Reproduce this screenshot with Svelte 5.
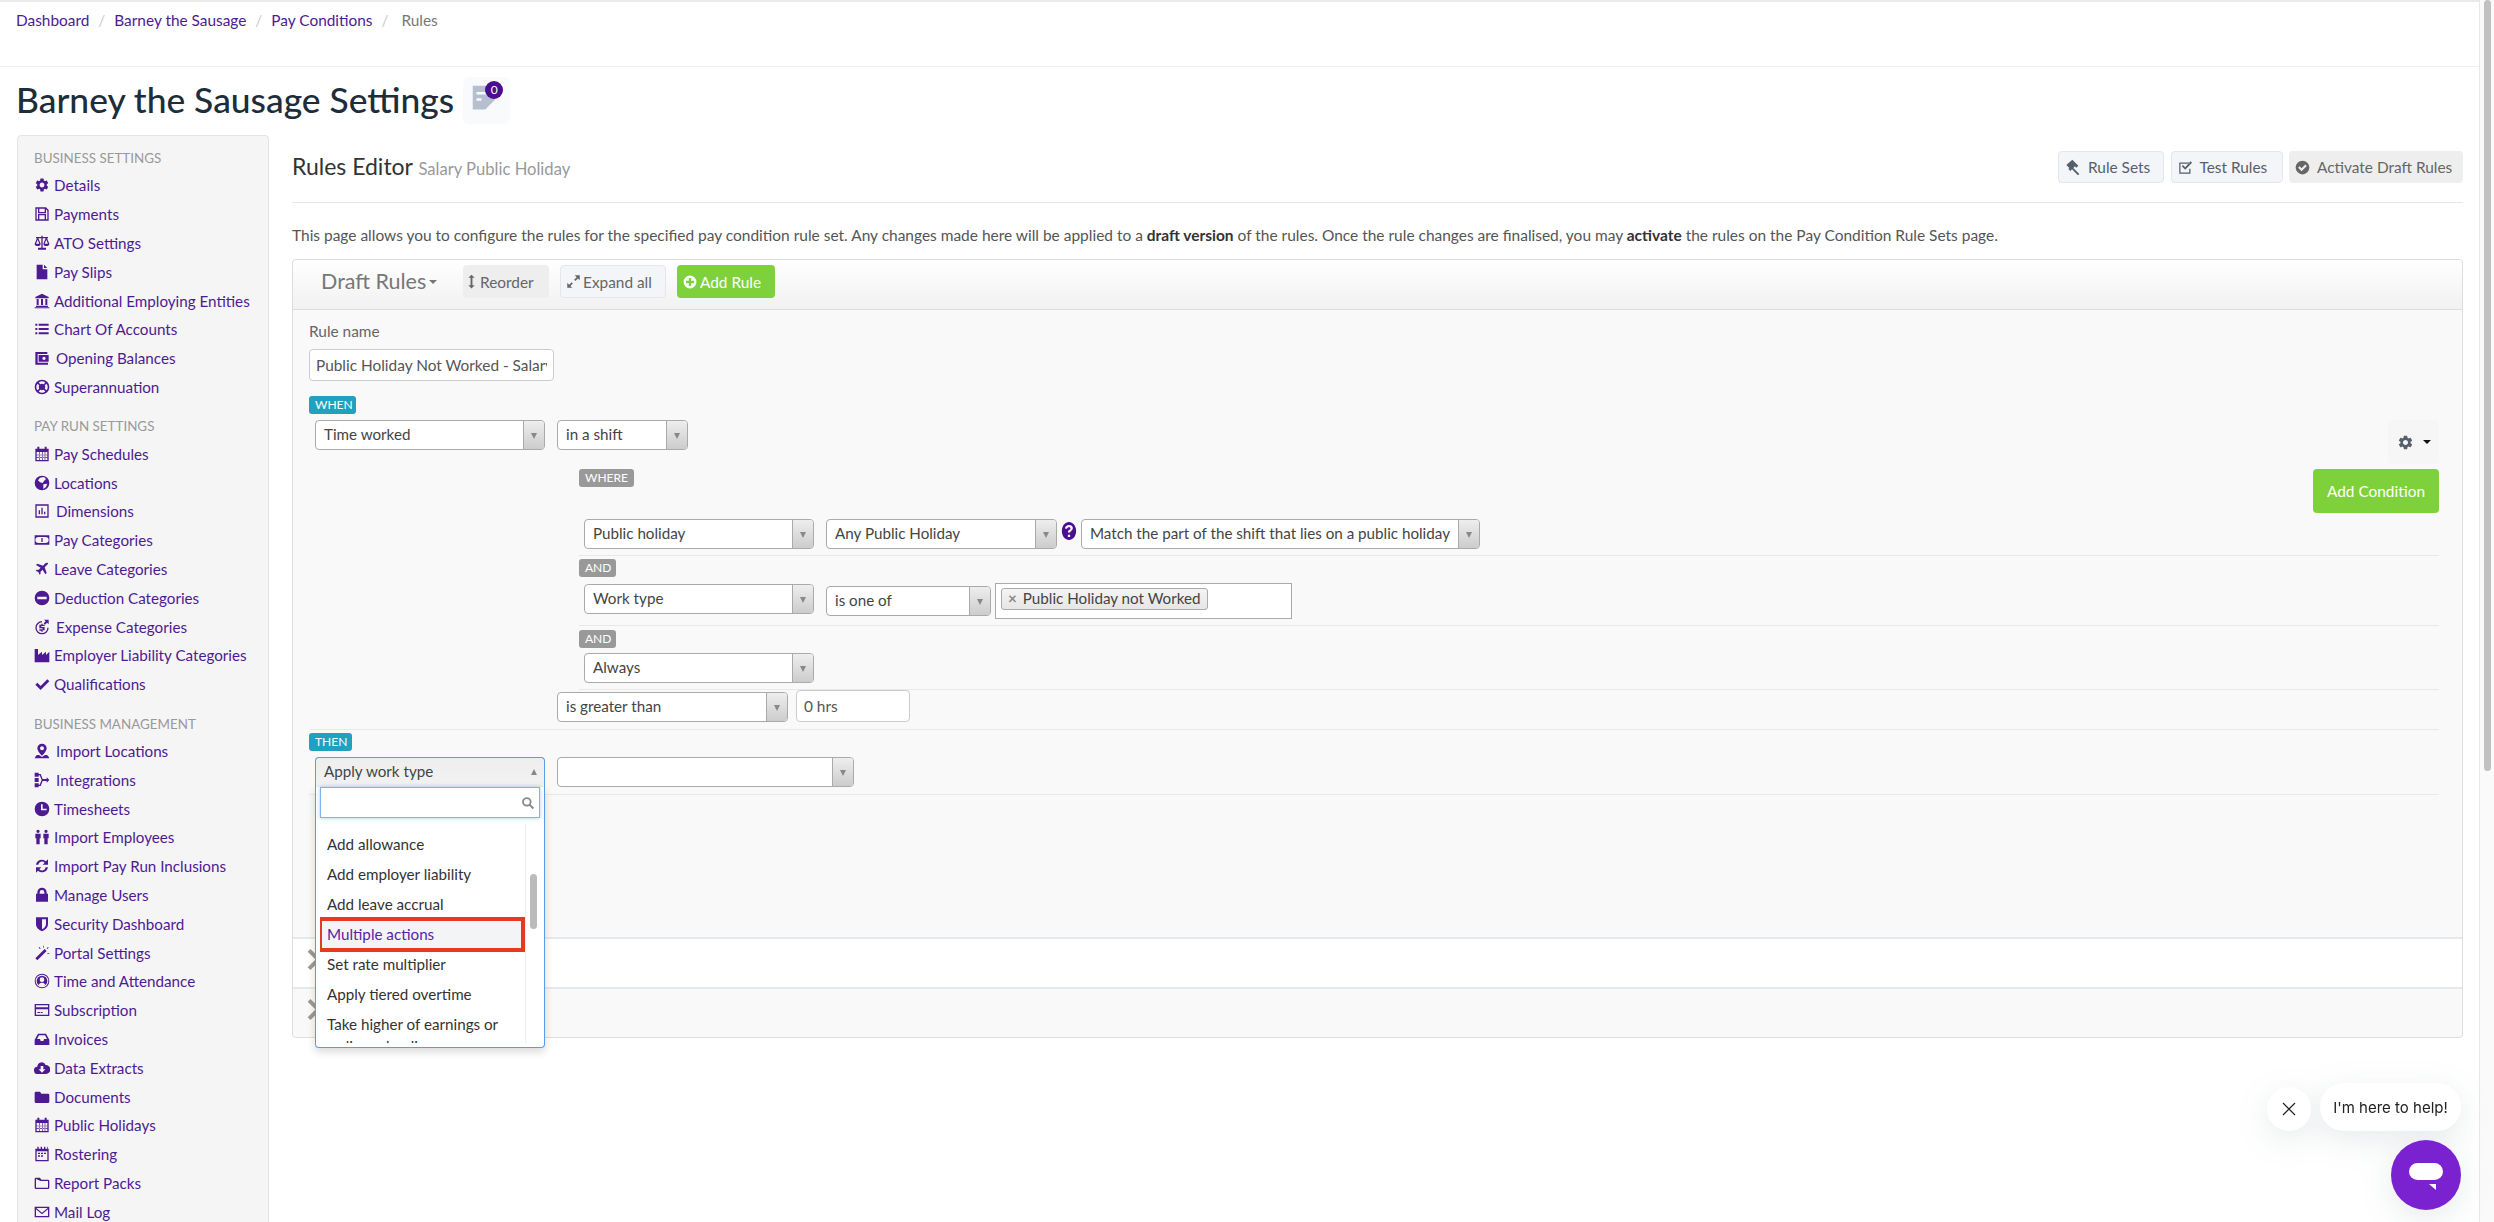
<script>
	const icons = {
		cog: "M19.14 12.94c.04-.3.06-.61.06-.94 0-.32-.02-.64-.07-.94l2.03-1.58c.18-.14.23-.41.12-.61l-1.92-3.32c-.12-.22-.37-.29-.59-.22l-2.39.96c-.5-.38-1.03-.7-1.62-.94l-.36-2.54c-.04-.24-.24-.41-.48-.41h-3.84c-.24 0-.43.17-.47.41l-.36 2.54c-.59.24-1.13.57-1.62.94l-2.39-.96c-.22-.08-.47 0-.59.22L2.74 8.87c-.12.21-.08.47.12.61l2.03 1.58c-.05.3-.09.63-.09.94s.02.64.07.94l-2.03 1.58c-.18.14-.23.41-.12.61l1.92 3.32c.12.22.37.29.59.22l2.39-.96c.5.38 1.03.7 1.62.94l.36 2.54c.05.24.24.41.48.41h3.84c.24 0 .44-.17.47-.41l.36-2.54c.59-.24 1.13-.56 1.62-.94l2.39.96c.22.08.47 0 .59-.22l1.92-3.32c.12-.22.07-.47-.12-.61l-2.01-1.58zM12 15.6c-1.98 0-3.6-1.62-3.6-3.6s1.62-3.6 3.6-3.6 3.6 1.62 3.6 3.6-1.62 3.6-3.6 3.6z",
		save: "M2 2h16l4 4v16H2zM4 4v16h2v-8h12v8h2V7l-2-2v6H6V4zM8 4v5h8V4zM8 14v6h8v-6z",
		scale: "M11 1h2v2h8v2h-1.5l3.5 8a4.5 3.5 0 0 1-9 0l3.5-8H13v14h5v3H6v-3h5V5H6.500l3.500 8a4.500 3.500 0 0 1-9 0l3.500-8H3V3h8zM5.500 7l-2.500 6h5zM18.500 7L16 13h5z",
		file: "M4 1h9v7h7v15H4zM15 1l5 5h-5z",
		bank: "M12 1l10 5v2H2V6zM4 9h3v9H4zM10.500 9h3v9h-3zM17 9h3v9h-3zM3 19h18v2H3zM1 21.500h22V23H1z",
		list: "M2 4h3v3H2zM7 4h15v3H7zM2 10.500h3v3H2zM7 10.500h15v3H7zM2 17h3v3H2zM7 17h15v3H7z",
		wallet: "M2 3h18v3H5.500v13H21v3H2zM7 7.500h15v10H7zM15 10a2.500 2.500 0 1 0 0 5a2.500 2.500 0 1 0 0-5z",
		ring: "M12 1a11 11 0 1 1 0 22a11 11 0 1 1 0-22zM7 5.200l2.500 2.600a5 5 0 0 1 5 0L17 5.200a8.500 8.500 0 0 0-10 0zM5.200 7a8.500 8.500 0 0 0 0 10l2.600-2.500a5 5 0 0 1 0-5zM18.800 7l-2.600 2.500a5 5 0 0 1 0 5l2.600 2.500a8.500 8.500 0 0 0 0-10zM9.500 16.200L7 18.800a8.500 8.500 0 0 0 10 0l-2.500-2.600a5 5 0 0 1-5 0z",
		cal: "M2 4h3V1h3v3h8V1h3v3h3v19H2zM4 9v12h16V9zM8 9h1v12H8zM12 9h1v12h-1zM16 9h1v12h-1zM4 13h16v1H4zM4 17h16v1H4z",
		globe: "M12 1a11 11 0 1 0 0 22a11 11 0 1 0 0-22zM9 4l6-1 3 3-3 3-2 3-4-1-3-3zM14 14l6-1-2 5-4 3z",
		chart: "M2 2h20v20H2zM4 4v16h16V4zM7 11h2v6H7zM11 7h2v10h-2zM15 13h2v4h-2z",
		money: "M1 5h22v14H1zM7 7.500a5 4.500 0 0 0 0 9h10a5 4.500 0 0 0 0-9zM11 9h2v6h-2z",
		plane: "M21 3c-1-1-3-.5-4 .5l-3.500 3.500L5 4 3 6l7 4-3.500 3.500-2.500-.5-1.500 1.500 4 2 2 4 1.500-1.500-.5-2.500L13 13l4 7 2-2-3-8.500 3.500-3.500c1-1 2-3 1.500-3.500z",
		minus: "M12 1a11 11 0 1 0 0 22a11 11 0 1 0 0-22zM5 10h14v4H5z",
		expense: "M12 3v2a8 8 0 1 0 8 8h2a10 10 0 1 1-10-10zM15 1h7v7l-2.500-2.500-3 3-2-2 3-3zM11 7h2v1.500h3v2h-5v1.500h5v5h-3V19h-2v-1.500H8v-2h5V14H8V8.500h3z",
		factory: "M1 3h5v9l6-5v5l6-5v5l5-5v16H1z",
		check: "M2 13l3-3 5 5L20 5l3 3L10 21z",
		pin: "M12 1a7 7 0 0 0-7 7c0 5 7 11 7 11s7-6 7-11a7 7 0 0 0-7-7zM12 5a3 3 0 1 0 0 6a3 3 0 1 0 0-6zM3 19c2-1 3-1 4.500-1l4.500 3 4.500-3c1.500 0 2.500 0 4.500 1l2 4H1z",
		nodes: "M1 1h6v6H1zM1 17h6v6H1zM7 3h3l3 7.500h6V8l4 4-4 4v-2.500h-6L10 21H7v-2h1.500l3-7-3-7H7zM1 9h6v6H1z",
		clock: "M12 1a11 11 0 1 0 0 22a11 11 0 1 0 0-22zM10.500 5H13v6.500h6V14h-8.500z",
		people: "M6 1a2.500 2.500 0 1 0 0 5a2.500 2.500 0 1 0 0-5zM2 7h8v7H8.500v9h-5v-9H2zM18 1a2.500 2.500 0 1 0 0 5a2.500 2.500 0 1 0 0-5zM14 7h8v7h-1.500v9h-5v-9H14z",
		sync: "M3 10a9 9 0 0 1 15-5l3-3v8h-8l3-3a5.500 5.500 0 0 0-9.500 3zM21 14a9 9 0 0 1-15 5l-3 3v-8h8l-3 3a5.500 5.500 0 0 0 9.500-3z",
		lock: "M5 10V8a7 7 0 0 1 14 0v2h2v12H3V10zM8.500 10h7V8a3.500 3.500 0 0 0-7 0z",
		shield: "M3 2h18v10c0 6-5 9-9 11-4-2-9-5-9-11zM12 5v15c3-1.500 6-4 6-8V5z",
		wand: "M2 20L16 6l3 3L5 23zM14 1h1v3h-1zM21 3l1 1-2 2-1-1zM8 3l2 2-1 1-2-2zM20 12h3v1h-3z",
		person: "M12 1a11 11 0 1 0 0 22a11 11 0 1 0 0-22zM12 2.500a9.500 9.500 0 1 1 0 19a9.500 9.500 0 1 1 0-19zM12 4a8 8 0 1 0 0 16a8 8 0 1 0 0-16zM12 6.500a3.500 3.500 0 1 1 0 7a3.500 3.500 0 1 1 0-7zM7 18c1-3 3-3.500 5-3.500s4 .5 5 3.500a8 8 0 0 1-10 0z",
		card: "M1 3h22v18H1zM3 5v3h18V5zM3 11v8h18v-8zM5 15h4v1.500H5zM10 15h3v1.500h-3z",
		inbox: "M6 4h12l5 9v8H1v-8zM7.500 6.500L4.500 12H9l1 3h4l1-3h4.500l-3-5.500z",
		cloud: "M6 21a5.500 5.500 0 0 1-1-11 6.500 6.500 0 0 1 12.500-2.500A6.500 6.500 0 0 1 18 21zM10 9v5H7l5 5 5-5h-3V9z",
		folder: "M1 6a2 2 0 0 1 2-2h6l2 3h10a2 2 0 0 1 2 2v10a2 2 0 0 1-2 2H3a2 2 0 0 1-2-2z",
		folderO: "M1 6a2 2 0 0 1 2-2h6l2 3h10a2 2 0 0 1 2 2v10a2 2 0 0 1-2 2H3a2 2 0 0 1-2-2zM3 6v13h18V9H10z",
		roster: "M2 4h3V1h2v3h3V1h2v3h3V1h2v3h3V1h1v3h1v19H2zM4 8v13h16V8zM6 10h3v2H6zM10.500 10h3v2h-3zM15 10h3v2h-3zM6 14h3v2H6zM10.500 14h3v2h-3z",
		mail: "M1 4h22v16H1zM3.500 6l8.500 7 8.500-7zM3 8v10h18V8l-9 7.500z",
		gavel: "M11 1l9 9-3 3-2-2-2.500 2.500 9 9-2 2-9-9L8 18l-3-3 1.500-1.500L2 9z",
		checkSq: "M2 4h16v2H4v14h14v-6h2v8H2zM6 10l2-2 3.500 3.500L20 2l2.500 2.500-11 11z",
		checkC: "M12 1a11 11 0 1 0 0 22a11 11 0 1 0 0-22zM5 12.500L7.500 10l3 3 6-6L19 9.500l-8.500 8.500z",
		plusC: "M12 1a11 11 0 1 0 0 22a11 11 0 1 0 0-22zM10 5h4v5h5v4h-5v5h-4v-5H5v-4h5z",
		expand: "M14 2h8v8l-3-3-4 4-2-2 4-4zM10 22H2v-8l3 3 4-4 2 2-4 4z",
		updown: "M12 1l5 5h-3.500v12H17l-5 5-5-5h3.500V6H7z",
		search: "M10 2a8 8 0 1 0 4.500 14.600L20 22.500l2.500-2.500-5.900-5.500A8 8 0 0 0 10 2zM10 5a5 5 0 1 1 0 10a5 5 0 1 1 0-10z",
		note: "M3 3h18v11l-8 8H3zM6 8v2h8V8zM6 13v2h4v-2z",
		help: "M12 0c5 0 9.500 5 9.500 12s-4.500 12-9.500 12-9.500-5-9.500-12S7 0 12 0zM12 4c-3 0-5 2-5.500 4.500l3 .5c.3-1.300 1-2 2.500-2s2 .8 2 1.600c0 1-1 1.500-2 2.200-1 .8-1.500 1.700-1.500 3.200h3c0-1 .5-1.400 1.500-2.100 1.300-1 2-2 2-3.500C17.500 6 15.500 4 12 4zM10.500 17v3h3v-3z"
	};

	const sections = [
		{ title: "Business Settings", items: [
			["cog", "Details"], ["save", "Payments"], ["scale", "ATO Settings"], ["file", "Pay Slips"],
			["bank", "Additional Employing Entities"], ["list", "Chart Of Accounts"], ["wallet", "Opening Balances", true], ["ring", "Superannuation"]
		]},
		{ title: "Pay Run Settings", items: [
			["cal", "Pay Schedules"], ["globe", "Locations"], ["chart", "Dimensions", true], ["money", "Pay Categories"],
			["plane", "Leave Categories"], ["minus", "Deduction Categories"], ["expense", "Expense Categories", true],
			["factory", "Employer Liability Categories"], ["check", "Qualifications"]
		]},
		{ title: "Business Management", items: [
			["pin", "Import Locations", true], ["nodes", "Integrations", true], ["clock", "Timesheets"], ["people", "Import Employees"],
			["sync", "Import Pay Run Inclusions"], ["lock", "Manage Users"], ["shield", "Security Dashboard"], ["wand", "Portal Settings"],
			["person", "Time and Attendance"], ["card", "Subscription"], ["inbox", "Invoices"], ["cloud", "Data Extracts"],
			["folder", "Documents"], ["cal", "Public Holidays"], ["roster", "Rostering"], ["folderO", "Report Packs"], ["mail", "Mail Log"]
		]}
	];

	const crumbs = ["Dashboard", "Barney the Sausage", "Pay Conditions"];
	const options = ["Add allowance", "Add employer liability", "Add leave accrual", "Multiple actions", "Set rate multiplier", "Apply tiered overtime", "Take higher of earnings or ordinary loading"];
</script>

{#snippet icon(name, size = 15)}
	<svg class="ico" width={size} height={size} viewBox="0 0 24 24" aria-hidden="true"><path fill="currentColor" fill-rule="evenodd" d={icons[name]} /></svg>
{/snippet}

{#snippet select(label, cls)}
	<div class="sel {cls}">
		<span class="sel-label">{label}</span>
		<span class="sel-arrow"></span>
	</div>
{/snippet}

<div class="page">
	<nav class="crumbs">
		{#each crumbs as c}
			<a href="#top">{c}</a><span class="sep">/</span>
		{/each}
		<span class="here">Rules</span>
	</nav>

	<header class="title">
		<h1>Barney the Sausage Settings</h1>
		<div class="notes">
			<span class="note-ico">{@render icon("note", 30)}</span>
			<span class="count">0</span>
		</div>
	</header>

	<div class="columns">
		<aside class="side">
			{#each sections as s}
				<h4>{s.title}</h4>
				<ul>
					{#each s.items as it}
						<li class:wide={it[2]}>{@render icon(it[0], 16)}<a href="#top">{it[1]}</a></li>
					{/each}
				</ul>
			{/each}
		</aside>

		<main class="main">
			<div class="head">
				<h2>Rules Editor <small>Salary Public Holiday</small></h2>
				<div class="head-btns">
					<button class="btn light b106">{@render icon("gavel", 16)}<span>Rule Sets</span></button>
					<button class="btn light b112">{@render icon("checkSq", 15)}<span>Test Rules</span></button>
					<button class="btn muted b174">{@render icon("checkC", 15)}<span>Activate Draft Rules</span></button>
				</div>
			</div>

			<p class="intro">This page allows you to configure the rules for the specified pay condition rule set. Any changes made here will be applied to a <b>draft version</b> of the rules. Once the rule changes are finalised, you may <b>activate</b> the rules on the Pay Condition Rule Sets page.</p>

			<section class="panel">
				<div class="panel-head">
					<span class="draft">Draft Rules<i class="caret"></i></span>
					<button class="tool muted">{@render icon("updown", 15)}Reorder</button>
					<button class="tool light">{@render icon("expand", 15)}Expand all</button>
					<button class="tool green">{@render icon("plusC", 14)}Add Rule</button>
				</div>

				<div class="rule">
					<label class="rule-label" for="rule-name">Rule name</label>
					<input id="rule-name" class="rule-name" value="Public Holiday Not Worked - Salary" readonly />

					<div class="tag blue when-tag">WHEN</div>
					<div class="when">
						{@render select("Time worked", "w230")}
						{@render select("in a shift", "w131")}
						<button class="gear">{@render icon("cog", 17)}<i class="caret dark"></i></button>
					</div>

					<div class="where">
						<div class="tag grey">WHERE</div>
						<button class="add-cond">Add Condition</button>
					</div>

					<div class="conds">
						<div class="cond first">
							{@render select("Public holiday", "w230")}
							{@render select("Any Public Holiday", "w231")}
							<span class="help">{@render icon("help", 18)}</span>
							{@render select("Match the part of the shift that lies on a public holiday", "w399")}
						</div>
						<div class="tag grey and">AND</div>
						<div class="cond second">
							{@render select("Work type", "w230")}
							{@render select("is one of", "w165 low")}
							<div class="multi">
								<span class="chip"><i>×</i>Public Holiday not Worked</span>
							</div>
						</div>
						<div class="tag grey and">AND</div>
						<div class="cond third">
							{@render select("Always", "w230")}
						</div>
					</div>

					<div class="greater">
						{@render select("is greater than", "w231")}
						<input class="hours" value="0 hrs" readonly />
					</div>

					<div class="tag blue then-tag">THEN</div>
					<div class="then">
						<div class="combo">
							<div class="sel open"><span class="sel-label">Apply work type</span><span class="up"></span></div>
							<div class="drop">
								<div class="find">{@render icon("search", 14)}</div>
								<div class="opts">
									<ul>
										{#each options as o}
											<li class:hit={o === "Multiple actions"} class:wrap={o.length > 30}>{o}</li>
										{/each}
									</ul>
									<div class="track"><span class="thumb"></span></div>
								</div>
							</div>
						</div>
						{@render select("", "w297")}
					</div>
				</div>

				<div class="collapsed"><span class="chev"></span></div>
				<div class="collapsed last"><span class="chev"></span></div>
			</section>
		</main>
	</div>
</div>

<div class="scroll"><span></span></div>

<div class="chat">
	<div class="chat-row">
		<button class="chat-x" aria-label="Close">
			<svg width="14" height="14" viewBox="0 0 14 14"><path d="M1 1l12 12M13 1L1 13" stroke="#222" stroke-width="1.200" fill="none" /></svg>
		</button>
		<div class="chat-msg">I'm here to help!</div>
	</div>
	<button class="chat-btn" aria-label="Open chat">
		<svg width="34" height="28" viewBox="0 0 34 28"><rect x="0" y="0" width="34" height="17" rx="8.500" fill="#fff" /><path d="M20 21l7 0 0 6z" fill="#fff" /></svg>
	</button>
</div>

<style>
	:global(body) {
		margin: 0;
		background: #fff;
		overflow: hidden;
		font-family: Lato, "Liberation Sans", sans-serif;
		font-size: 15.400px;
		color: #555;
	}

	a {
		color: #4e1a94;
		text-decoration: none;
	}

	button {
		font: inherit;
		border: 0;
		cursor: pointer;
	}

	.ico {
		flex: none;
		display: block;
	}

	.page {
		height: 1222px;
		overflow: hidden;
	}

	.crumbs {
		border-top: 2px solid #eaeaea;
		border-bottom: 1px solid #efefef;
		padding: 9px 0 0 16px;
		height: 55px;
		font-size: 15.400px;
		line-height: 18px;
	}

	.sep {
		color: #ccc;
		margin: 0 9px;
	}

	.here {
		color: #777;
	}

	.title {
		display: flex;
		align-items: flex-start;
		height: 58px;
		padding: 10px 0 0 16px;
	}

	h1 {
		margin: 0;
		font-size: 35.400px;
		line-height: 46px;
		font-weight: 500;
		color: #1d2d3a;
	}

	.notes {
		position: relative;
		width: 47px;
		height: 47px;
		margin-left: 9px;
		background: #f9fafb;
		border-radius: 6px;
		box-sizing: border-box;
		padding: 5px 0 0 6px;
	}

	.note-ico {
		color: #b5bfd0;
		display: block;
	}

	.count {
		position: absolute;
		left: 22px;
		top: 4px;
		width: 18px;
		height: 18px;
		border-radius: 50%;
		background: #4a0e8f;
		color: #fff;
		font-size: 12px;
		line-height: 18px;
		text-align: center;
	}

	.columns {
		display: flex;
		align-items: flex-start;
		padding: 0 31px 0 17px;
		gap: 23px;
	}

	.side {
		flex: none;
		width: 252px;
		box-sizing: border-box;
		background: #f5f5f5;
		border: 1px solid #e3e3e3;
		border-radius: 4px;
		padding: 13px 0 0 16px;
	}

	.side h4 {
		margin: 0 0 4px;
		font-size: 13.400px;
		line-height: 18px;
		font-weight: 400;
		text-transform: uppercase;
		color: #999;
	}

	.side ul {
		list-style: none;
		margin: 0 0 16px;
		padding: 0;
	}

	.side li {
		display: flex;
		align-items: center;
		height: 28.800px;
		color: #4e1a94;
		white-space: nowrap;
		font-size: 15.200px;
	}

	.side li a {
		margin-left: 4px;
	}

	.side li.wide a {
		margin-left: 6px;
	}

	.main {
		flex: 1;
		min-width: 0;
	}

	.head {
		display: flex;
		justify-content: space-between;
		align-items: flex-start;
		padding-top: 17px;
		height: 50px;
		border-bottom: 1px solid #e7e7e7;
	}

	h2 {
		margin: -1px 0 0;
		font-size: 23px;
		line-height: 30px;
		font-weight: 400;
		color: #333;
	}

	h2 small {
		font-size: 16.600px;
		color: #999;
	}

	.head-btns {
		display: flex;
		gap: 6.500px;
		margin-top: -1px;
	}

	.btn {
		display: flex;
		align-items: center;
		height: 32px;
		padding: 0 0 0 6px;
		gap: 7px;
		border-radius: 4px;
		color: #56606b;
		box-sizing: border-box;
	}

	.b106 { width: 106px; }
	.b112 { width: 112px; }
	.b174 { width: 174px; }

	.light {
		background: #f3f5f8;
		border: 1px solid #e3e7ec;
	}

	.muted {
		background: #eee;
		color: #666;
	}

	.intro {
		margin: 0;
		padding-top: 23px;
		height: 33px;
		line-height: 18px;
		font-size: 15.480px;
		white-space: nowrap;
	}

	.intro b {
		color: #333;
		font-weight: 700;
	}

	.panel {
		border: 1px solid #ddd;
		border-radius: 4px;
		background: #f9f9f9;
	}

	.panel-head {
		display: flex;
		align-items: flex-start;
		height: 44px;
		padding: 5px 0 0 28px;
		border-bottom: 1px solid #ddd;
		background: linear-gradient(#fff, #f1f1f1);
		border-radius: 4px 4px 0 0;
	}

	.draft {
		font-size: 21.500px;
		line-height: 33px;
		color: #777;
		width: 142px;
		display: flex;
		align-items: center;
	}

	.caret {
		display: inline-block;
		width: 0;
		height: 0;
		margin-left: 3px;
		border: 4px solid transparent;
		border-top-color: #777;
		border-bottom: 0;
	}

	.caret.dark {
		border-top-color: #111;
		margin-left: 9px;
	}

	.tool {
		display: flex;
		align-items: center;
		height: 33px;
		box-sizing: border-box;
		border-radius: 4px;
		padding: 0 6px;
		gap: 3px;
		color: #666;
		margin-right: 11px;
		white-space: nowrap;
	}

	.tool.muted {
		width: 86px;
		padding: 0 1px;
		gap: 1px;
	}

	.tool.light {
		width: 106px;
		padding: 0 5px;
		gap: 2px;
	}

	.tool.green {
		width: 98px;
		background: #7ed13a;
		color: #fff;
	}

	.rule {
		padding: 0 23px 0 16px;
		height: 627px;
		box-sizing: border-box;
	}

	.rule-label {
		display: block;
		height: 39px;
		padding-top: 12px;
		box-sizing: border-box;
		line-height: 18px;
		color: #666;
	}

	.rule-name {
		display: block;
		width: 245px;
		height: 32px;
		box-sizing: border-box;
		padding: 0 6px;
		border: 1px solid #ccc;
		border-radius: 4px;
		font: inherit;
		color: #555;
		background: #fff;
		outline: 0;
	}

	.tag {
		display: inline-block;
		height: 18px;
		line-height: 17px;
		padding: 0 6px;
		box-sizing: border-box;
		border-radius: 3px;
		font-size: 12px;
		color: #fff;
		vertical-align: top;
	}

	.blue {
		background: #21a0c0;
	}

	.grey {
		background: #999;
	}

	.when-tag {
		display: block;
		width: 47px;
		margin-top: 15px;
	}

	.when {
		display: flex;
		align-items: flex-start;
		gap: 12px;
		height: 49px;
		margin: 6px 0 0 6px;
	}

	.gear {
		margin-left: auto;
		width: 51px;
		height: 44px;
		background: #f6f6f6;
		color: #56606b;
		border-radius: 4px;
		display: flex;
		align-items: center;
		justify-content: center;
	}

	.where {
		display: flex;
		justify-content: space-between;
		align-items: flex-start;
		height: 50px;
		margin-left: 270px;
	}

	.add-cond {
		width: 126px;
		height: 44px;
		background: #7ed13a;
		color: #fff;
		border-radius: 4px;
	}

	.conds {
		margin-left: 270px;
	}

	.cond {
		display: flex;
		align-items: flex-start;
		padding-left: 5px;
		gap: 12px;
		border-bottom: 1px solid #e8e8e8;
		box-sizing: border-box;
	}

	.first {
		height: 37px;
	}

	.second {
		height: 42px;
		margin-top: 7px;
	}

	.third {
		height: 37px;
		margin-top: 5px;
	}

	.and {
		display: block;
		width: 37px;
		margin-top: 3px;
	}

	.cond.second + .and {
		margin-top: 4px;
	}

	.second .low {
		margin-top: 2px;
	}

	.sel {
		display: flex;
		flex: none;
		height: 30px;
		box-sizing: border-box;
		background: #fff;
		border: 1px solid #aaa;
		border-radius: 4px;
		overflow: hidden;
	}

	.sel-label {
		flex: 1;
		min-width: 0;
		padding-left: 8px;
		line-height: 26px;
		white-space: nowrap;
		overflow: hidden;
		font-size: 15.200px;
		color: #444;
	}

	.sel-arrow {
		position: relative;
		flex: none;
		width: 20px;
		border-left: 1px solid #aaa;
		background: linear-gradient(#eee, #ccc);
	}

	.sel-arrow::after {
		content: "";
		position: absolute;
		left: 7px;
		top: 12px;
		border: 3.500px solid transparent;
		border-top: 6px solid #888;
		border-bottom: 0;
	}

	.w230 { width: 230px; }
	.w131 { width: 131px; }
	.w231 { width: 231px; }
	.w399 { width: 399px; }
	.w165 { width: 165px; }
	.w297 { width: 297px; }

	.help {
		color: #4a0e8f;
		margin: 3px -6px 0 -6px;
		width: 12px;
	}

	.help :global(svg) {
		margin-left: -3px;
	}

	.multi {
		width: 297px;
		height: 36px;
		margin: -1px 0 0 -8px;
		box-sizing: border-box;
		padding: 4px 5px;
		background: #fff;
		border: 1px solid #aaa;
	}

	.chip {
		display: inline-block;
		height: 22px;
		box-sizing: border-box;
		padding: 0 6px;
		line-height: 19px;
		border: 1px solid #aaa;
		border-radius: 3px;
		background: linear-gradient(#f4f4f4, #e6e6e6);
		color: #444;
		font-size: 15.200px;
	}

	.chip i {
		font-style: normal;
		font-weight: 700;
		color: #888;
		margin-right: 6px;
	}

	.greater {
		display: flex;
		align-items: flex-start;
		gap: 8px;
		height: 40px;
		padding-left: 248px;
		border-bottom: 1px solid #e8e8e8;
		box-sizing: border-box;
	}

	.greater .sel {
		margin-top: 2px;
	}

	.hours {
		width: 114px;
		height: 32px;
		box-sizing: border-box;
		padding: 0 7px;
		border: 1px solid #ccc;
		border-radius: 4px;
		font: inherit;
		color: #555;
		background: #fff;
		outline: 0;
	}

	.then-tag {
		display: block;
		width: 43px;
		margin-top: 3px;
	}

	.then {
		display: flex;
		align-items: flex-start;
		gap: 12px;
		height: 38px;
		margin-top: 6px;
		padding-left: 6px;
		border-bottom: 1px solid #e8e8e8;
		box-sizing: border-box;
	}

	.combo {
		position: relative;
		width: 230px;
		height: 30px;
		flex: none;
	}

	.sel.open {
		width: 230px;
		border-color: #5b9bea;
		border-bottom: 0;
		border-radius: 4px 4px 0 0;
		background: linear-gradient(#eee, #f2f2f2);
		align-items: flex-start;
	}

	.up {
		flex: none;
		margin: 11px 7px 0 0;
		border: 3.500px solid transparent;
		border-bottom: 6px solid #888;
		border-top: 0;
	}

	.drop {
		position: absolute;
		left: 0;
		top: 30px;
		z-index: 5;
		width: 230px;
		height: 261px;
		box-sizing: border-box;
		background: #fff;
		border: 1px solid #5b9bea;
		border-top: 0;
		border-radius: 0 0 4px 4px;
		box-shadow: 0 4px 8px rgba(0, 0, 0, 0.15);
		padding: 0 4px;
	}

	.find {
		display: flex;
		align-items: center;
		justify-content: flex-end;
		height: 31px;
		box-sizing: border-box;
		padding-right: 4px;
		border: 1px solid #7fb2ee;
		color: #888;
		box-shadow: 0 0 4px rgba(91, 155, 234, 0.5);
	}

	.opts {
		display: flex;
		height: 219px;
		margin-top: 6px;
		overflow: hidden;
	}

	.opts ul {
		list-style: none;
		flex: 1;
		margin: 0;
		padding: 6px 0 0;
		height: 300px;
	}

	.opts li {
		height: 30px;
		line-height: 29px;
		padding-left: 9px;
		color: #333;
		margin: 0 0 0 -2px;
		font-size: 15.200px;
	}

	.opts li.wrap {
		line-height: 22px;
		padding-top: 3px;
		padding-right: 8px;
	}

	.opts li.hit {
		height: 35px;
		line-height: 27px;
		margin: -3px 0 -2px -2px;
		box-sizing: border-box;
		padding-left: 5px;
		background: #f3f4f6;
		color: #5b22a8;
		border: 4px solid #e63a20;
	}

	.track {
		flex: none;
		width: 15px;
		border-left: 1px solid #eee;
		box-sizing: border-box;
		padding: 50px 0 0 4px;
	}

	.thumb {
		display: block;
		width: 7px;
		height: 55px;
		border-radius: 4px;
		background: #bbb;
	}

	.collapsed {
		position: relative;
		height: 48px;
		background: #fff;
		border-top: 2px solid #e6e9ec;
	}

	.collapsed.last {
		background: #f9f9f9;
		border-radius: 0 0 4px 4px;
	}

	.chev {
		position: absolute;
		left: 10px;
		top: 13px;
		width: 11px;
		height: 11px;
		border-top: 4px solid #999;
		border-right: 4px solid #999;
		transform: rotate(45deg);
	}

	.scroll {
		position: fixed;
		top: 0;
		right: 0;
		bottom: 0;
		width: 15px;
		box-sizing: border-box;
		background: #fafafa;
		border-left: 1px solid #e8e8e8;
		padding: 0 3px 0 4px;
	}

	.scroll span {
		display: block;
		height: 771px;
		border-radius: 4px;
		background: #c1c1c1;
	}

	.chat {
		position: fixed;
		right: 33px;
		bottom: 12px;
		display: flex;
		flex-direction: column;
		align-items: flex-end;
		gap: 9px;
		filter: drop-shadow(0 8px 16px rgba(60, 80, 90, 0.12));
	}

	.chat-row {
		display: flex;
		align-items: flex-end;
		gap: 9px;
	}

	.chat-x {
		width: 44px;
		height: 44px;
		border-radius: 50%;
		background: #fff;
		display: flex;
		align-items: center;
		justify-content: center;
	}

	.chat-msg {
		width: 141px;
		height: 48px;
		border-radius: 24px;
		background: #fff;
		text-align: center;
		line-height: 50px;
		font-family: Inter, sans-serif;
		font-size: 15px;
		color: #222;
	}

	.chat-btn {
		width: 70px;
		height: 70px;
		border-radius: 50%;
		background: #7b22d0;
		display: flex;
		align-items: center;
		justify-content: center;
		padding: 4px 0 0;
	}
</style>
